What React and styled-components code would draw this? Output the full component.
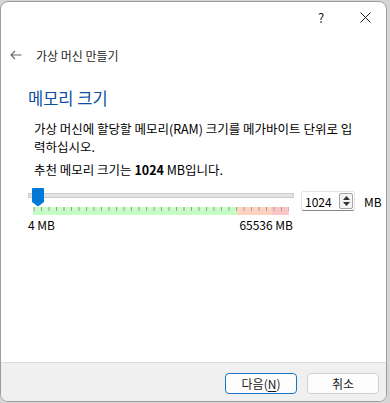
import React from 'react';
import styled, { createGlobalStyle } from 'styled-components';

const GlobalStyle = createGlobalStyle`
    html, body {
        margin: 0;
        padding: 0;
        background: #d6d6d6;
    }

    body {
        font-family: 'Noto Sans CJK KR', 'Noto Sans', sans-serif;
        color: #000;
    }
`;

const Window = styled.div`
    box-sizing: border-box;
    width: 387px;
    height: 401px;
    margin: 1px 0 0 0;
    border: 1px solid #9c9c9c;
    border-radius: 8px;
    background: #fff;
    overflow: hidden;
    display: flex;
    flex-direction: column;
`;

const TitleBar = styled.div`
    height: 30px;
    display: flex;
    justify-content: flex-end;
    align-items: stretch;
`;

const CaptionButton = styled.div`
    width: ${props => props.width}px;
    display: flex;
    align-items: center;
    justify-content: center;
    font-size: 13px;
    color: #1a1a1a;
`;

const Header = styled.div`
    height: 26px;
    display: flex;
    align-items: center;
    gap: 14px;
    padding-left: 9px;
    margin-top: 10px;
`;

const HeaderTitle = styled.span`
    font-size: 12px;
    color: #1f1f1f;
`;

const Content = styled.div`
    flex: 1;
    padding: 19px 0 0 27px;
`;

const Heading = styled.h1`
    margin: 0;
    font-size: 16.5px;
    font-weight: 400;
    color: #0b4ea2;
    line-height: 22px;
`;

const Text = styled.p`
    margin: ${props => props.top}px 0 0 6px;
    font-size: 12.5px;
    line-height: 18px;
    white-space: nowrap;

    b {
        font-weight: 700;
    }
`;

const SliderRow = styled.div`
    display: flex;
    align-items: flex-start;
    margin-top: 9px;
`;

const SliderColumn = styled.div`
    width: 266px;
    display: flex;
    flex-direction: column;
`;

const SliderArea = styled.div`
    position: relative;
    height: 27px;
`;

const Track = styled.div`
    position: absolute;
    left: 0;
    right: 0;
    top: 5px;
    height: 3px;
    background: #e3e3e3;
    border: 1px solid #cdcdcd;
`;

const Thumb = styled.svg`
    position: absolute;
    left: 4px;
    top: 0;
`;

const Scale = styled.svg`
    position: absolute;
    left: 5px;
    top: 19px;
`;

const Labels = styled.div`
    display: flex;
    justify-content: space-between;
    font-size: 12px;
    line-height: 16px;
    padding-right: 1px;
    margin-top: 2px;
`;

const SpinBox = styled.div`
    box-sizing: border-box;
    margin: 3px 0 0 7px;
    width: 54px;
    height: 20px;
    border: 1px solid #e4e4e4;
    border-bottom-color: #868686;
    border-radius: 3px;
    display: flex;
    align-items: center;
    justify-content: space-between;
    padding: 0 1px 0 3px;
    font-size: 12px;
`;

const SpinButtons = styled.div`
    box-sizing: border-box;
    width: 14px;
    height: 16px;
    border: 1px solid #a3a3a3;
    border-radius: 2px;
    background: #f3f3f3;
    display: flex;
    flex-direction: column;
    align-items: center;
    justify-content: space-around;
    padding: 1px 0;
`;

const Unit = styled.span`
    margin: 5px 0 0 9px;
    font-size: 12px;
`;

const Footer = styled.div`
    height: 39px;
    border-top: 1px solid #dcdcdc;
    background: #f0f0f0;
    display: flex;
    justify-content: flex-end;
    align-items: flex-start;
    gap: 10px;
    padding: 10px 7px 0 0;
    box-sizing: border-box;
`;

const Button = styled.button`
    box-sizing: border-box;
    width: 72px;
    height: 21px;
    padding: 0;
    border-radius: 4px;
    border: 1px solid ${props => (props.primary ? '#1a73c9' : '#d0d0d0')};
    background: #fdfdfd;
    font-family: inherit;
    font-size: 12px;
    color: #1a1a1a;

    u {
        text-decoration-thickness: 1px;
        text-underline-offset: 2px;
    }
`;

const TICKS = Array.from({ length: 35 }, (_, i) => 0.5 + i * 7.5);

export default function App() {
    return (
        <>
            <GlobalStyle />
            <Window>
                <TitleBar>
                    <CaptionButton width={46}>?</CaptionButton>
                    <CaptionButton width={42}>
                        <svg width="11" height="11" viewBox="0 0 11 11">
                            <path d="M0.5 0.5 L10.5 10.5 M10.5 0.5 L0.5 10.5" stroke="#1a1a1a" strokeWidth="1" />
                        </svg>
                    </CaptionButton>
                </TitleBar>
                <Header>
                    <svg width="12" height="10" viewBox="0 0 12 10">
                        <path d="M11.5 5 H1 M5 1 L1 5 L5 9" stroke="#666" strokeWidth="1.1" fill="none" />
                    </svg>
                    <HeaderTitle>가상 머신 만들기</HeaderTitle>
                </Header>
                <Content>
                    <Heading>메모리 크기</Heading>
                    <Text top={11}>
                        가상 머신에 할당할 메모리(RAM) 크기를 메가바이트 단위로 입
                        <br />
                        력하십시오.
                    </Text>
                    <Text top={5}>
                        추천 메모리 크기는 <b>1024</b> MB입니다.
                    </Text>
                    <SliderRow>
                        <SliderColumn>
                            <SliderArea>
                                <Track />
                                <Scale width="256" height="8" viewBox="0 0 256 8">
                                    <rect x="0" y="0" width="204" height="8" fill="#c6fcc6" />
                                    <rect x="204" y="0" width="35" height="8" fill="#fdd4c0" />
                                    <rect x="239" y="0" width="17" height="8" fill="#fdc6c6" />
                                    {TICKS.map(x => (
                                        <rect key={x} x={x} y="0" width="1" height="4" fill="#a59a90" />
                                    ))}
                                </Scale>
                                <Thumb width="12" height="19" viewBox="0 0 12 19">
                                    <path d="M1 0 H11 Q12 0 12 1 V14 L6 18.5 L0 14 V1 Q0 0 1 0 Z" fill="#0078d7" />
                                </Thumb>
                            </SliderArea>
                            <Labels>
                                <span>4 MB</span>
                                <span>65536 MB</span>
                            </Labels>
                        </SliderColumn>
                        <SpinBox>
                            <span>1024</span>
                            <SpinButtons>
                                <svg width="7" height="4" viewBox="0 0 7 4">
                                    <path d="M0 4 L3.5 0 L7 4 Z" fill="#333" />
                                </svg>
                                <svg width="7" height="4" viewBox="0 0 7 4">
                                    <path d="M0 0 L3.5 4 L7 0 Z" fill="#333" />
                                </svg>
                            </SpinButtons>
                        </SpinBox>
                        <Unit>MB</Unit>
                    </SliderRow>
                </Content>
                <Footer>
                    <Button primary>
                        다음(<u>N</u>)
                    </Button>
                    <Button>취소</Button>
                </Footer>
            </Window>
        </>
    );
}
